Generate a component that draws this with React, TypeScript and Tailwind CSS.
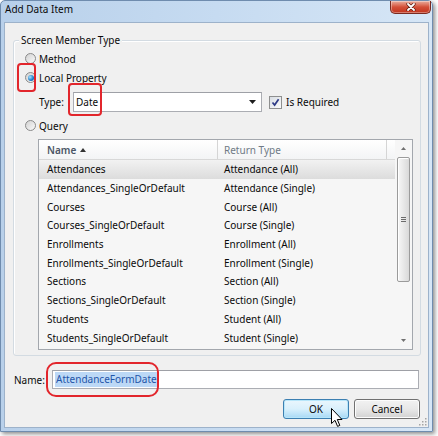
import React from "react";

const rows = [
  ["Attendances", "Attendance (All)"],
  ["Attendances_SingleOrDefault", "Attendance (Single)"],
  ["Courses", "Course (All)"],
  ["Courses_SingleOrDefault", "Course (Single)"],
  ["Enrollments", "Enrollment (All)"],
  ["Enrollments_SingleOrDefault", "Enrollment (Single)"],
  ["Sections", "Section (All)"],
  ["Sections_SingleOrDefault", "Section (Single)"],
  ["Students", "Student (All)"],
  ["Students_SingleOrDefault", "Student (Single)"],
];

function Radio({ checked }: { checked?: boolean }) {
  return (
    <span className="flex h-[11px] w-[11px] shrink-0 items-center justify-center rounded-full border border-[#8a8a8a] bg-gradient-to-br from-[#d2d2d2] to-[#fafafa]">
      {checked && (
        <span className="h-[6px] w-[6px] rounded-full bg-[radial-gradient(circle_at_35%_35%,#a8e4ff,#1c7ac8_60%,#0c4c8c)]" />
      )}
    </span>
  );
}

export default function App() {
  return (
    <div className="relative h-[436px] w-[438px] overflow-hidden bg-white font-['Noto_Sans',sans-serif] text-[10px] leading-[12px] text-[#0a0a0a]">
      {/* Window */}
      <div className="flex h-[432px] w-[433px] flex-col rounded-t-[5px] border border-[#6f8cae] bg-gradient-to-r from-[#b8d0ea] via-[#c6dbf1] to-[#d6e6f6] shadow-[2px_2px_4px_rgba(0,0,0,0.45)]">
        {/* Title bar */}
        <div className="flex h-[21px] items-start pl-[4px] pr-[1px]">
          <span className="mt-[2px] text-[#0a0a0a]">Add Data Item</span>
          <div className="ml-auto flex h-[13px] w-[41px] items-center justify-center rounded-b-[5px] border border-t-0 border-[#7a2a20] bg-gradient-to-b from-[#e7ad9f] via-[#d34f38] to-[#c0341c] shadow-[inset_0_0_0_1px_rgba(255,255,255,0.35)]">
            <svg width="10" height="8" viewBox="0 0 10 8">
              <path d="M2 1 L8 7 M8 1 L2 7" stroke="#5a1a10" strokeWidth="3.2" strokeLinecap="round" />
              <path d="M2 1 L8 7 M8 1 L2 7" stroke="#ffffff" strokeWidth="1.8" strokeLinecap="round" />
            </svg>
          </div>
        </div>

        {/* Client area */}
        <div className="relative mx-[3px] flex h-[406px] flex-col border border-[#9db2ca] bg-[#f0f0f0]">
          {/* Group box */}
          <div className="relative ml-[8px] mt-[17px] flex h-[316px] w-[408px] flex-col rounded-[3px] border border-[#d3dbe2] pl-[11px] pt-[8px] shadow-[inset_1px_1px_0_#ffffff]">
            <span className="absolute left-[5px] top-[-7px] bg-[#f0f0f0] px-[2px]">Screen Member Type</span>

            <div className="flex h-[19px] items-center gap-[3px]">
              <Radio />
              <span>Method</span>
            </div>
            <div className="flex h-[19px] items-center gap-[3px]">
              <Radio checked />
              <span>Local Property</span>
            </div>

            {/* Type row */}
            <div className="ml-[14px] mt-[5px] flex h-[20px] items-center">
              <span className="w-[34px]">Type:</span>
              <div className="flex h-[20px] w-[189px] items-center border border-[#abadb3] border-t-[#9ea0a6] bg-white pl-[2px] pr-[5px]">
                <span>Date</span>
                <svg className="ml-auto" width="7" height="4" viewBox="0 0 7 4">
                  <path d="M0 0 H7 L3.5 4 Z" fill="#1e1e1e" />
                </svg>
              </div>
              <div className="ml-[7px] flex h-[13px] w-[13px] items-center justify-center border border-[#8e8f8f] bg-gradient-to-br from-[#d8dde4] to-[#fbfbfb]">
                <svg width="9" height="9" viewBox="0 0 9 9">
                  <path d="M1.5 4.5 L3.6 7 L7.6 1.2" stroke="#2d3a86" strokeWidth="1.7" fill="none" />
                </svg>
              </div>
              <span className="ml-[4px]">Is Required</span>
            </div>

            <div className="mt-[4px] flex h-[19px] items-center gap-[3px]">
              <Radio />
              <span>Query</span>
            </div>

            {/* List */}
            <div className="ml-[13px] mt-[4px] flex h-[211px] w-[375px] border border-[#a3a7ad] bg-[#f6f6f6]">
              <div className="flex w-[356px] flex-col">
                <div className="flex h-[20px] shrink-0 items-center border-b border-[#d8d8d8] bg-gradient-to-b from-[#ffffff] to-[#f3f4f5]">
                  <div className="flex h-full w-[179px] items-center gap-[4px] border-r border-[#d5d5d5] pl-[8px] font-semibold text-[#4a5565]">
                    <span>Name</span>
                    <svg width="6" height="4" viewBox="0 0 6 4">
                      <path d="M0 4 L3 0 L6 4 Z" fill="#333" />
                    </svg>
                  </div>
                  <div className="flex h-full w-[169px] items-center border-r border-[#d5d5d5] pl-[6px] text-[#6f7a86]">
                    Return Type
                  </div>
                </div>
                {rows.map(([name, type], i) => (
                  <div
                    key={name}
                    className={
                      i === 0
                        ? "flex h-[18.7px] shrink-0 items-center bg-gradient-to-b from-[#f2f2f2] to-[#dcdcdc]"
                        : "flex h-[18.7px] shrink-0 items-center"
                    }
                  >
                    <span className="w-[179px] pl-[8px]">{name}</span>
                    <span className="pl-[6px]">{type}</span>
                  </div>
                ))}
              </div>

              {/* Scrollbar */}
              <div className="flex w-[17px] flex-col">
                <div className="flex h-[17px] items-center justify-center">
                  <svg width="5" height="3" viewBox="0 0 5 3">
                    <path d="M0 3 L2.5 0 L5 3 Z" fill="#707070" />
                  </svg>
                </div>
                <div className="ml-[2px] flex h-[125px] w-[13px] flex-col items-center justify-center gap-[1px] rounded-[2px] border border-[#9b9b9b] bg-gradient-to-r from-[#f7f7f7] to-[#d9d9d9] shadow-[inset_1px_1px_0_#ffffff]">
                  <span className="h-[1px] w-[5px] bg-[#6a6a6a]" />
                  <span className="h-[1px] w-[5px] bg-[#6a6a6a]" />
                  <span className="h-[1px] w-[5px] bg-[#6a6a6a]" />
                </div>
                <div className="flex-1" />
                <div className="flex h-[17px] items-center justify-center">
                  <svg width="5" height="3" viewBox="0 0 5 3">
                    <path d="M0 0 H5 L2.5 3 Z" fill="#707070" />
                  </svg>
                </div>
              </div>
            </div>
          </div>

          {/* Name row */}
          <div className="ml-[9px] mt-[14px] flex h-[19px] items-center">
            <span className="w-[38px]">Name:</span>
            <div className="flex h-[19px] w-[367px] items-center border border-[#abadb3] border-t-[#9ea0a6] bg-white pl-[2px]">
              <span className="bg-[#bcd8f6] px-[1px] leading-[15px] text-[#1f55a8]">AttendanceFormDate</span>
            </div>
          </div>

          {/* Buttons */}
          <div className="mt-[10px] flex justify-end gap-[5px] pr-[8px]">
            <button className="flex h-[20px] w-[66px] items-center justify-center rounded-[3px] border border-[#3c7fb1] bg-gradient-to-b from-[#eaf6fd] via-[#d9f0fc] to-[#a7d9f5] shadow-[inset_0_0_0_1px_#b7e6fa]">
              OK
            </button>
            <button className="flex h-[20px] w-[66px] items-center justify-center rounded-[3px] border border-[#707070] bg-gradient-to-b from-[#f2f2f2] via-[#e8e8e8] to-[#d2d2d2] shadow-[inset_0_0_0_1px_#fcfcfc]">
              Cancel
            </button>
          </div>

          {/* Resize grip */}
          <svg className="absolute bottom-[1px] right-[1px]" width="10" height="10" viewBox="0 0 10 10">
            {[
              [8, 2], [8, 5], [5, 5], [8, 8], [5, 8], [2, 8],
            ].map(([x, y]) => (
              <rect key={`${x}-${y}`} x={x} y={y} width="1.5" height="1.5" fill="#a5a5a5" />
            ))}
          </svg>
        </div>
      </div>

      {/* Red annotation outlines */}
      <div className="absolute left-[17px] top-[63px] h-[29px] w-[19px] rounded-[4px] border-2 border-[#e2262c]" />
      <div className="absolute left-[68px] top-[83px] h-[33px] w-[34px] rounded-[4px] border-2 border-[#e2262c]" />
      <div className="absolute left-[46px] top-[362px] h-[35px] w-[113px] rounded-[10px] border-2 border-[#e2262c]" />

      {/* Mouse cursor */}
      <svg className="absolute left-[331px] top-[408px]" width="13" height="20" viewBox="0 0 13 20">
        <path
          d="M0.5 0.5 L0.5 15.5 L4 12.3 L6.6 18.4 L8.8 17.4 L6.3 11.5 L11 11.5 Z"
          fill="#ffffff"
          stroke="#000000"
          strokeWidth="1"
          strokeLinejoin="round"
        />
      </svg>
    </div>
  );
}
